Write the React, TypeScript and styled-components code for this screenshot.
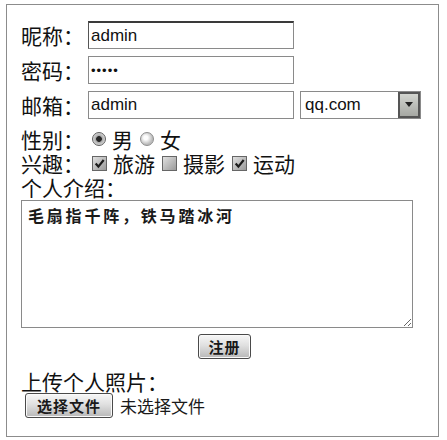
import React from 'react';
import styled, { createGlobalStyle } from 'styled-components';

const GlobalStyle = createGlobalStyle`
  html, body {
    margin: 0;
    padding: 0;
    background: #fff;
  }
  body {
    font-family: "Noto Sans CJK SC", "Liberation Sans", sans-serif;
    color: #111;
  }
`;

const Form = styled.form`
  box-sizing: border-box;
  width: 433px;
  height: 433px;
  margin: 4px 0 0 6px;
  border: 1px solid #8c8c8c;
  padding: 16px 14px 0 14px;
  display: flex;
  flex-direction: column;
`;

const FieldRow = styled.div`
  display: flex;
  align-items: center;
  height: 28px;
  & + & {
    margin-top: 7px;
  }
`;

const Label = styled.label<{ $width?: number }>`
  flex-shrink: 0;
  width: ${p => (p.$width ? `${p.$width}px` : 'auto')};
  font-size: 21px;
  line-height: 24px;
  color: #111;
  white-space: nowrap;
`;

const TextInput = styled.input<{ $focused?: boolean }>`
  box-sizing: border-box;
  width: 206px;
  height: 28px;
  margin: 0;
  padding: 0 2px;
  border: 1px solid #8a8a8a;
  border-top: ${p => (p.$focused ? '2px solid #3a3a3a' : '1px solid #8a8a8a')};
  border-left: ${p => (p.$focused ? '1px solid #555' : '1px solid #8a8a8a')};
  font-family: "Liberation Sans", Arial, sans-serif;
  font-size: 17px;
  color: #111;
  background: #fff;
  outline: none;
  &[type='password'] {
    font-size: 13px;
    letter-spacing: 1px;
  }
`;

const SelectBox = styled.div`
  box-sizing: border-box;
  width: 121px;
  height: 28px;
  margin-left: 6px;
  border: 1px solid #8a8a8a;
  display: flex;
  align-items: center;
  justify-content: space-between;
  background: #fff;
`;

const SelectValue = styled.span`
  padding-left: 4px;
  font-family: "Liberation Sans", Arial, sans-serif;
  font-size: 17px;
  color: #111;
`;

const SelectArrow = styled.span`
  box-sizing: border-box;
  width: 22px;
  height: 26px;
  border: 2px solid #555;
  background: linear-gradient(#d2d4cf, #a6a8a3);
  display: flex;
  justify-content: center;
  padding-top: 8px;
`;

const OptionRow = styled.div<{ $gap?: number }>`
  display: flex;
  align-items: center;
  height: 24px;
  margin-top: ${p => p.$gap ?? 0}px;
  font-size: 21px;
  line-height: 24px;
`;

const OptionGroup = styled.div`
  display: flex;
  align-items: center;
  margin-left: 4px;
`;

const Radio = styled.span<{ $checked?: boolean }>`
  box-sizing: border-box;
  width: 14px;
  height: 14px;
  border-radius: 50%;
  border: 1px solid ${p => (p.$checked ? '#5e5e5e' : '#8e8e8e')};
  background: ${p =>
    p.$checked
      ? 'radial-gradient(circle, #262626 0 2.5px, #a8a8a8 3.2px, #dedede 6.5px)'
      : 'radial-gradient(circle at 40% 40%, #fdfdfd 0 2px, #bcbcbc 6.5px)'};
`;

const CheckBox = styled.span`
  box-sizing: border-box;
  width: 15px;
  height: 15px;
  border: 1px solid #666;
  background: linear-gradient(135deg, #e0e0e0, #9a9a9a);
  display: flex;
  align-items: center;
  justify-content: center;
`;

const OptionText = styled.span`
  margin: 0 7px 0 6px;
  color: #111;
`;

const IntroLabel = styled(Label)`
  display: block;
`;

const Intro = styled.textarea`
  box-sizing: border-box;
  width: 392px;
  height: 128px;
  margin: 1px 0 0 0;
  padding: 4px 6px;
  border: 1px solid #8a8a8a;
  font-family: "Noto Sans CJK SC", sans-serif;
  font-size: 16px;
  font-weight: 700;
  letter-spacing: 2.8px;
  line-height: 20px;
  color: #1a1a1a;
  outline: none;
  resize: both;
`;

const ButtonRow = styled.div`
  display: flex;
  justify-content: center;
  margin-top: 6px;
  padding-left: 4px;
`;

const GreyButton = styled.button<{ $width: number }>`
  box-sizing: border-box;
  width: ${p => p.$width}px;
  height: 25px;
  margin: 0;
  padding: 0;
  border: 1px solid #4a4a4a;
  border-radius: 3px;
  background: linear-gradient(#f7f7f7 0%, #e0e0e0 45%, #b8b8b8 100%);
  box-shadow: inset 0 0 0 1px #fafafa;
  font-family: "Noto Sans CJK SC", sans-serif;
  font-size: 15px;
  font-weight: 700;
  line-height: 21px;
  letter-spacing: 1px;
  color: #1a1a1a;
  cursor: pointer;
`;

const FileRow = styled.div`
  display: flex;
  align-items: center;
  gap: 7px;
  margin-left: 4px;
`;

const FileNote = styled.span`
  font-size: 17px;
  line-height: 25px;
  color: #1a1a1a;
`;

const UploadLabel = styled(Label)`
  display: block;
  margin-top: 10px;
`;

function Check() {
  return (
    <svg width="11" height="11" viewBox="0 0 10 10">
      <path d="M1.5 5 L4 7.8 L8.8 1.8" fill="none" stroke="#1d1d1d" strokeWidth="2" />
    </svg>
  );
}

function Caret() {
  return (
    <svg width="8" height="5" viewBox="0 0 8 5">
      <path d="M0 0 H8 L4 5 Z" fill="#222" />
    </svg>
  );
}

export default function App() {
  return (
    <>
      <GlobalStyle />
      <Form onSubmit={e => e.preventDefault()}>
        <FieldRow>
          <Label $width={67}>昵称：</Label>
          <TextInput $focused defaultValue="admin" />
        </FieldRow>
        <FieldRow>
          <Label $width={67}>密码：</Label>
          <TextInput type="password" defaultValue="11111" />
        </FieldRow>
        <FieldRow>
          <Label $width={67}>邮箱：</Label>
          <TextInput defaultValue="admin" />
          <SelectBox>
            <SelectValue>qq.com</SelectValue>
            <SelectArrow>
              <Caret />
            </SelectArrow>
          </SelectBox>
        </FieldRow>
        <OptionRow $gap={8}>
          <Label $width={67}>性别：</Label>
          <OptionGroup>
            <Radio $checked />
            <OptionText>男</OptionText>
            <Radio />
            <OptionText>女</OptionText>
          </OptionGroup>
        </OptionRow>
        <OptionRow>
          <Label $width={67}>兴趣：</Label>
          <OptionGroup>
            <CheckBox><Check /></CheckBox>
            <OptionText>旅游</OptionText>
            <CheckBox />
            <OptionText>摄影</OptionText>
            <CheckBox><Check /></CheckBox>
            <OptionText>运动</OptionText>
          </OptionGroup>
        </OptionRow>
        <IntroLabel>个人介绍：</IntroLabel>
        <Intro defaultValue="毛扇指千阵，铁马踏冰河" />
        <ButtonRow>
          <GreyButton $width={53} type="submit">注册</GreyButton>
        </ButtonRow>
        <UploadLabel>上传个人照片：</UploadLabel>
        <FileRow>
          <GreyButton $width={88} type="button">选择文件</GreyButton>
          <FileNote>未选择文件</FileNote>
        </FileRow>
      </Form>
    </>
  );
}
